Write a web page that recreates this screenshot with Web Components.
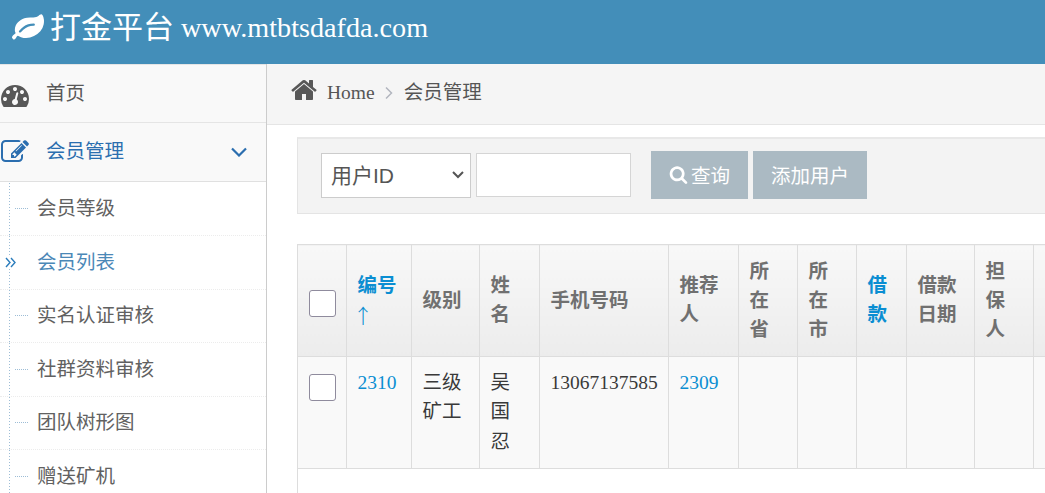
<!DOCTYPE html>
<html lang="zh">
<head>
<meta charset="utf-8">
<title>打金平台</title>
<style>
    html, body {
        margin: 0;
        height: 100%;
        overflow: hidden;
        background: #fff;
        font-family: "Liberation Serif", "Noto Sans CJK SC", serif;
        font-size: 19.5px;
        line-height: 29.25px;
        color: #393939;
    }
    .layout { display: flex; height: 429px; }
</style>
</head>
<body>
<app-header brand="打金平台">www.mtbtsdafda.com</app-header>
<div class="layout">
    <side-nav>
        <nav-item icon="gauge">首页</nav-item>
        <nav-item icon="edit" open>会员管理</nav-item>
        <sub-item>会员等级</sub-item>
        <sub-item active>会员列表</sub-item>
        <sub-item>实名认证审核</sub-item>
        <sub-item>社群资料审核</sub-item>
        <sub-item>团队树形图</sub-item>
        <sub-item>赠送矿机</sub-item>
    </side-nav>
    <main-panel>
        <bread-crumb>会员管理</bread-crumb>
        <search-bar></search-bar>
        <member-table></member-table>
    </main-panel>
</div>

<script>
const ICONS = {
    leaf: 'M1280 704q0-26-19-45t-45-19q-172 0-318 49.5t-259.5 134-235.5 219.5q-19 21-19 45 0 26 19 45t45 19q24 0 45-19 27-24 74-71t67-66q137-124 268.5-176t313.5-52q26 0 45-19t19-45zm512-198q0 95-20 193-46 224-184.5 383t-357.5 268q-214 108-438 108-148 0-286-47-15-5-88-42t-96-37q-16 0-39.5 32t-45 70-52.5 70-60 32q-43 0-63.5-17t-45.5-59q-2-4-6-11t-5.5-10-3-9.5-1.5-13.5q0-35 31-73.5t68-65.5 68-56 31-48q0-4-14-38t-16-44q-9-51-9-104 0-115 43.5-220t119-184.5 170.5-139 204-95.5q55-18 145-25.5t179.5-9 178.5-6 163.5-24 113.5-56.5l29.5-29.5 29.5-28 27-20 36.5-16 43.5-4.5q39 0 70.5 46t47.5 112 24 124 8 96z',
    gauge: 'M384 1152q0-53-37.5-90.5t-90.5-37.5-90.5 37.5-37.5 90.5 37.5 90.5 90.5 37.5 90.5-37.5 37.5-90.5zm192-448q0-53-37.5-90.5t-90.5-37.5-90.5 37.5-37.5 90.5 37.5 90.5 90.5 37.5 90.5-37.5 37.5-90.5zm428 481l101-382q6-26-7.5-48.5t-38.5-29.5-48 6.5-30 39.5l-101 382q-60 5-107 43.5t-63 98.5q-20 77 20 146t117 89 146-20 89-117q16-60-6-117t-72-91zm660-33q0-53-37.5-90.5t-90.5-37.5-90.5 37.5-37.5 90.5 37.5 90.5 90.5 37.5 90.5-37.5 37.5-90.5zm-640-640q0-53-37.5-90.5t-90.5-37.5-90.5 37.5-37.5 90.5 37.5 90.5 90.5 37.5 90.5-37.5 37.5-90.5zm448 192q0-53-37.5-90.5t-90.5-37.5-90.5 37.5-37.5 90.5 37.5 90.5 90.5 37.5 90.5-37.5 37.5-90.5zm320 448q0 261-141 483-19 29-54 29h-1402q-35 0-54-29-141-221-141-483 0-182 71-348t191-286 286-191 348-71 348 71 286 191 191 286 71 348z',
    edit: 'M888 1184l116-116-152-152-116 116v56h96v96h56zm440-720q-16-16-33 1l-350 350q-17 17-1 33t33-1l350-350q17-17 1-33zm80 594v190q0 119-84.5 203.5t-203.5 84.5h-832q-119 0-203.5-84.5t-84.5-203.5v-832q0-119 84.5-203.5t203.5-84.5h832q63 0 117 25 15 7 18 23 3 17-9 29l-49 49q-14 14-32 8-23-6-45-6h-832q-66 0-113 47t-47 113v832q0 66 47 113t113 47h832q66 0 113-47t47-113v-126q0-13 9-22l64-64q15-15 35-7t20 29zm-96-738l288 288-672 672h-288v-288zm444 132l-92 92-288-288 92-92q28-28 68-28t68 28l152 152q28 28 28 68t-28 68z',
    home: 'M1472 992v480q0 26-19 45t-45 19h-384v-384h-256v384h-384q-26 0-45-19t-19-45v-480q0-1 .5-3t.5-3l575-474 575 474q1 2 1 6zm223-69l-62 74q-8 9-21 11h-3q-13 0-21-7l-692-577-692 577q-12 8-24 7-13-2-21-11l-62-74q-8-10-7-23.5t11-21.5l719-599q32-26 76-26t76 26l244 204v-195q0-14 9-23t23-9h192q14 0 23 9t9 23v408l219 182q10 8 11 21.5t-7 23.5z',
    search: 'M1216 832q0-185-131.5-316.5t-316.5-131.5-316.5 131.5-131.5 316.5 131.5 316.5 316.5 131.5 316.5-131.5 131.5-316.5zm512 832q0 52-38 90t-90 38q-54 0-90-38l-343-342q-179 124-399 124-143 0-273.5-55.5t-225-150-150-225-55.5-273.5 55.5-273.5 150-225 225-150 273.5-55.5 273.5 55.5 225 150 150 225 55.5 273.5q0 220-124 399l343 343q37 37 37 90z'
};

function icon(name, size) {
    return `<svg width="${size}" height="${size}" viewBox="0 0 1792 1792" fill="currentColor" aria-hidden="true"><path d="${ICONS[name]}"/></svg>`;
}

class AppHeader extends HTMLElement {
    constructor() {
        super();
        this.attachShadow({ mode: 'open' });
    }

    connectedCallback() {
        const brand = this.getAttribute('brand') || '';
        this.shadowRoot.innerHTML = `
            <style>
                :host {
                    display: flex;
                    align-items: center;
                    height: 64px;
                    padding: 0 0 8px 12px;
                    box-sizing: border-box;
                    background: #438eb9;
                    color: #fff;
                    font-size: 28.2px;
                }
                svg { flex: none; margin-right: 6px; }
                .brand { font-size: 31px; margin-right: 7px; }
            </style>
            ${icon('leaf', 32)}
            <span class="brand">${brand}</span>
            <slot></slot>
        `;
    }
}

class SideNav extends HTMLElement {
    constructor() {
        super();
        this.attachShadow({ mode: 'open' });
    }

    connectedCallback() {
        this.shadowRoot.innerHTML = `
            <style>
                :host {
                    display: block;
                    flex: none;
                    width: 267px;
                    box-sizing: border-box;
                    border-right: 1px solid #ccc;
                    background: #fff;
                    overflow: hidden;
                }
            </style>
            <slot></slot>
        `;
    }
}

class NavItem extends HTMLElement {
    constructor() {
        super();
        this.attachShadow({ mode: 'open' });
    }

    connectedCallback() {
        const open = this.hasAttribute('open');
        this.shadowRoot.innerHTML = `
            <style>
                :host {
                    display: flex;
                    align-items: center;
                    height: 58px;
                    box-sizing: border-box;
                    padding: 0 19px 0 0;
                    border-top: 1px solid #e5e5e5;
                    background: #f9f9f9;
                    color: ${open ? '#2b6eaf' : '#585858'};
                    font-size: 19.5px;
                }
                :host([open]) { border-bottom: 1px solid #e0e0e0; height: 60px; margin-bottom: .5px; }
                .ic { flex: none; width: 45px; margin-left: 1px; display: flex; padding-top: ${open ? 0 : 2}px; }
                .tx { flex: 1; }
                svg.ch { display: block; }
            </style>
            <span class="ic">${icon(this.getAttribute('icon'), 28)}</span>
            <span class="tx"><slot></slot></span>
            ${open ? '<svg class="ch" width="16" height="10" viewBox="0 0 16 10" fill="none" stroke="currentColor" stroke-width="2.2"><path d="M1 1.5l7 7 7-7"/></svg>' : ''}
        `;
    }
}

class SubItem extends HTMLElement {
    constructor() {
        super();
        this.attachShadow({ mode: 'open' });
    }

    connectedCallback() {
        const active = this.hasAttribute('active');
        this.shadowRoot.innerHTML = `
            <style>
                :host {
                    display: flex;
                    align-items: center;
                    height: 53.5px;
                    box-sizing: border-box;
                    padding-left: 5px;
                    border-bottom: 1px dotted #ececec;
                    color: ${active ? '#4b88b7' : '#616161'};
                    background:
                        repeating-linear-gradient(to bottom, #9dbdd6 0 1px, transparent 1px 3px) 9px 0 / 1px 100% no-repeat;
                }
                .mark { flex: none; width: 32px; display: flex; }
                .tick {
                    width: 13px;
                    margin-left: 10px;
                    border-top: 1px dotted #9dbdd6;
                }
                svg { display: block; background: #fff; }
            </style>
            <span class="mark">${active
                ? '<svg width="11" height="11" viewBox="0 0 11 11" fill="none" stroke="#2b7dbc" stroke-width="1.4"><path d="M1 1l4 4.5-4 4.5M6 1l4 4.5-4 4.5"/></svg>'
                : '<span class="tick"></span>'}</span>
            <slot></slot>
        `;
    }
}

class MainPanel extends HTMLElement {
    constructor() {
        super();
        this.attachShadow({ mode: 'open' });
    }

    connectedCallback() {
        this.shadowRoot.innerHTML = `
            <style>
                :host {
                    display: block;
                    flex: 1;
                    min-width: 0;
                    overflow: hidden;
                }
            </style>
            <slot></slot>
        `;
    }
}

class BreadCrumb extends HTMLElement {
    constructor() {
        super();
        this.attachShadow({ mode: 'open' });
    }

    connectedCallback() {
        this.shadowRoot.innerHTML = `
            <style>
                :host {
                    display: flex;
                    align-items: center;
                    height: 61px;
                    box-sizing: border-box;
                    padding: 0 0 3px 23px;
                    border-bottom: 1px solid #e5e5e5;
                    background: #f5f5f5;
                    color: #555;
                }
                .home { display: flex; margin-right: 9px; margin-top: -5px; color: #585858; }
                .sep { margin: 1px 11px 0 10px; display: flex; }
            </style>
            <span class="home">${icon('home', 28)}</span>
            <span>Home</span>
            <span class="sep"><svg width="8" height="14" viewBox="0 0 8 14" fill="none" stroke="#b2b6bf" stroke-width="1.5"><path d="M1 1.5l5.5 5.5-5.5 5.5"/></svg></span>
            <slot></slot>
        `;
    }
}

class SearchBar extends HTMLElement {
    constructor() {
        super();
        this.attachShadow({ mode: 'open' });
    }

    connectedCallback() {
        this.shadowRoot.innerHTML = `
            <style>
                :host {
                    display: flex;
                    align-items: center;
                    height: 77px;
                    box-sizing: border-box;
                    margin: 12px 0 0 30px;
                    padding: 0 0 2px 23px;
                    border: 1px solid #e4e4e4;
                    border-top: 2px solid #e8e8e8;
                    border-right: 0;
                    background: #f3f3f3;
                }
                select, input {
                    box-sizing: border-box;
                    border-radius: 0;
                    outline: none;
                    color: #555;
                }
                select {
                    appearance: none;
                    width: 150px;
                    height: 45px;
                    padding: 0 0 0 9px;
                    border: 1px solid #ccc;
                    font: 21px "Liberation Sans", "Noto Sans CJK SC", sans-serif;
                    background: #fff url("data:image/svg+xml,%3Csvg xmlns='http://www.w3.org/2000/svg' width='12' height='8' fill='none' stroke='%23555' stroke-width='2'%3E%3Cpath d='M1 1l5 5 5-5'/%3E%3C/svg%3E") no-repeat 130px 17px;
                }
                input {
                    width: 155px;
                    height: 44px;
                    margin: 0 20px 1px 5px;
                    border: 1px solid #d5d5d5;
                    background: #fff;
                }
                button {
                    display: flex;
                    align-items: center;
                    justify-content: center;
                    height: 48px;
                    padding: 0 0 2px;
                    border: 0;
                    background: #abbac3;
                    color: #fff;
                    font: 19.5px "Liberation Serif", "Noto Sans CJK SC", serif;
                }
                .query { width: 97px; margin-right: 5px; gap: 3px; }
                .add { width: 114px; }
            </style>
            <select><option>用户ID</option></select>
            <input type="text">
            <button class="query" type="button">${icon('search', 19)}查询</button>
            <button class="add" type="button">添加用户</button>
        `;
    }
}

class MemberTable extends HTMLElement {
    constructor() {
        super();
        this.attachShadow({ mode: 'open' });
    }

    connectedCallback() {
        const cols = [49, 65, 68, 60, 129, 70, 59, 59, 50, 68, 59, 60];
        const heads = ['', '编号<span class="arrow">↑</span>', '级别', '姓名', '手机号码', '推荐人', '所在省', '所在市', '借款', '借款日期', '担保人', ''];
        const sorted = [1, 8];
        const row = ['', '2310', '三级矿工', '吴国忍', '13067137585', '2309', '', '', '', '', '', ''];
        const box = '<input type="checkbox">';
        this.shadowRoot.innerHTML = `
            <style>
                :host {
                    display: block;
                    margin: 30px 0 0 30px;
                    height: 250px;
                    border-left: 1px solid #ddd;
                    overflow: hidden;
                }
                table {
                    table-layout: fixed;
                    width: ${cols.reduce((a, b) => a + b, 0)}px;
                    border-collapse: collapse;
                    margin-left: -1px;
                }
                th, td {
                    padding: 11.6px 11px 11.6px 10.5px;
                    border: 1px solid #ddd;
                    box-sizing: border-box;
                    text-align: left;
                    word-break: break-all;
                }
                th {
                    vertical-align: middle;
                    font-weight: bold;
                    color: #707070;
                    background: linear-gradient(to bottom, #f8f8f8 0%, #ececec 100%);
                }
                th.sort { color: #0a8ed2; }
                .arrow {
                    display: block;
                    margin: 1px 0 -1px -4.5px;
                    font: 300 20px/29.25px "Noto Sans CJK SC", sans-serif;
                }
                td {
                    padding-top: 11.2px;
                    padding-bottom: 12px;
                    vertical-align: top;
                    background: #f9f9f9;
                    color: #393939;
                }
                td.link { color: #0a8ed2; }
                td.phone { white-space: nowrap; }
                input {
                    appearance: none;
                    display: block;
                    width: 27px;
                    height: 27px;
                    margin: 6px 0 0 .5px;
                    border: 1px solid #8f8b9d;
                    border-radius: 3px;
                    background: #fff;
                }
                td input { margin-top: 6px; }
            </style>
            <table>
                <colgroup>${cols.map(w => `<col style="width:${w}px">`).join('')}</colgroup>
                <thead><tr>${heads.map((h, i) => `<th class="${sorted.includes(i) ? 'sort' : ''}">${i === 0 ? box : h}</th>`).join('')}</tr></thead>
                <tbody><tr>${row.map((c, i) => `<td class="${i === 1 || i === 5 ? 'link' : i === 4 ? 'phone' : ''}">${i === 0 ? box : c}</td>`).join('')}</tr></tbody>
            </table>
        `;
    }
}

customElements.define('app-header', AppHeader);
customElements.define('side-nav', SideNav);
customElements.define('nav-item', NavItem);
customElements.define('sub-item', SubItem);
customElements.define('main-panel', MainPanel);
customElements.define('bread-crumb', BreadCrumb);
customElements.define('search-bar', SearchBar);
customElements.define('member-table', MemberTable);
</script>
</body>
</html>
